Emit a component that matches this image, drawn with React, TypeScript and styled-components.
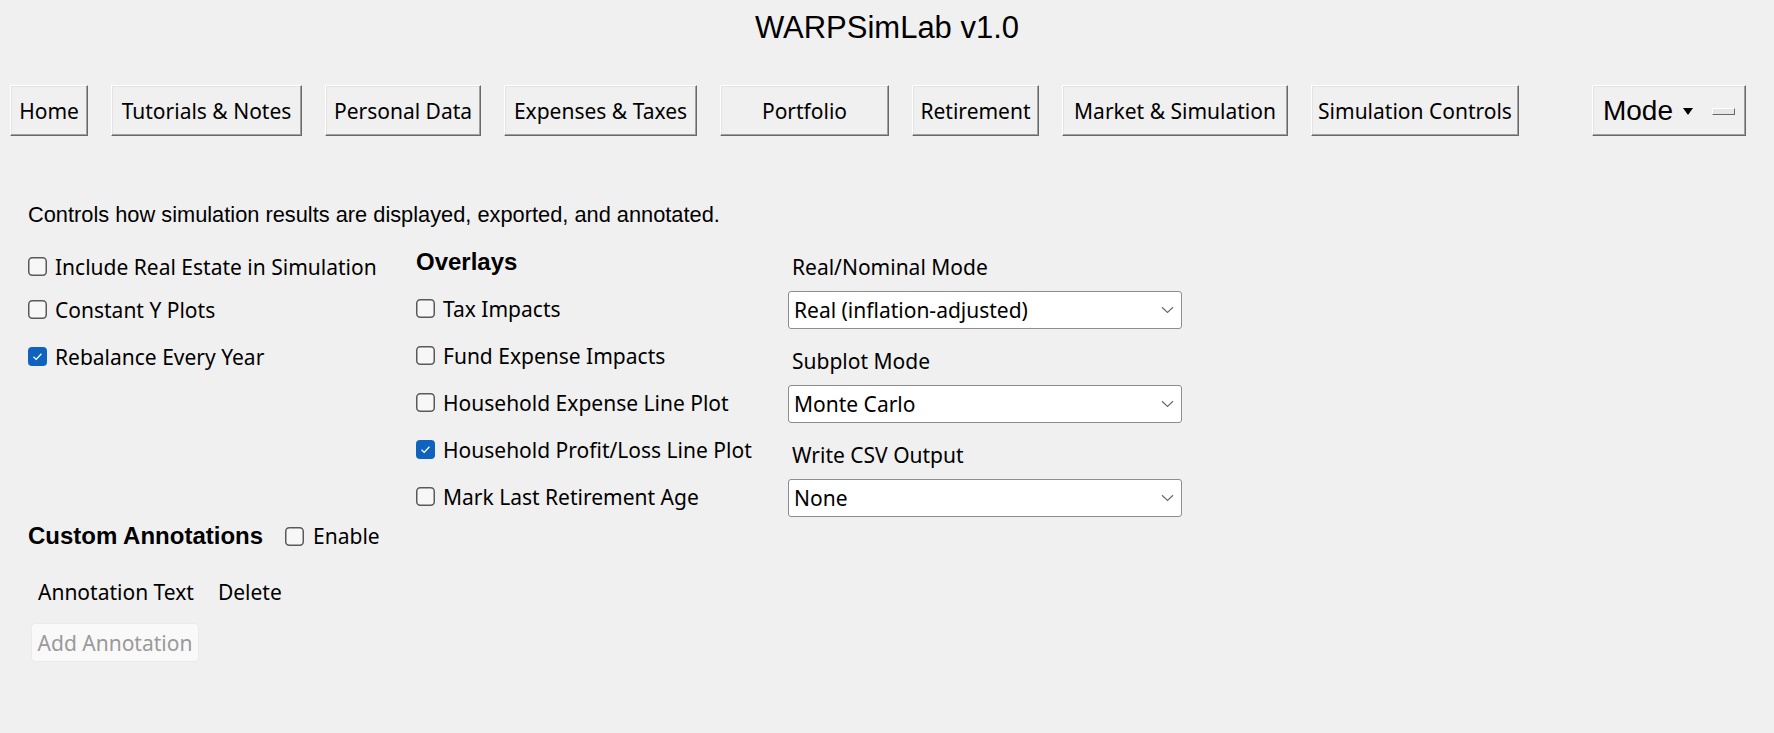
import styled, { createGlobalStyle } from 'styled-components';

/*
 *  globals
 */
const GlobalStyle = createGlobalStyle`
  html, body {
    margin: 0;
    padding: 0;
    background: #f0f0f0;
    overflow: hidden;
  }
`;

const ui = `'Noto Sans', 'Open Sans', sans-serif`;
const tk = `'Liberation Sans', Arial, sans-serif`;

const Window = styled.div`
  width: 1774px;
  height: 733px;
  background: #f0f0f0;
  display: flex;
  flex-direction: column;
  color: #000;
`;

const Title = styled.h1`
  margin: 0;
  padding-top: 10px;
  font-family: ${tk};
  font-size: 31px;
  font-weight: 400;
  line-height: 36px;
  text-align: center;
`;

/*
 *  nav bar
 */
const NavBar = styled.nav`
  display: flex;
  align-items: center;
  gap: 23px;
  margin-top: 39px;
  padding: 0 28px 0 10px;
`;

const raised = `
  box-sizing: border-box;
  background: #f0f0f0;
  border: 1px solid;
  border-color: #ffffff #696969 #696969 #ffffff;
  box-shadow: inset -1px -1px 0 #a0a0a0, inset 1px 1px 0 #e3e3e3;
`;

const NavButton = styled.button<{ $width: number }>`
  ${raised}
  width: ${(p) => p.$width}px;
  height: 51px;
  padding: 0;
  font-family: ${ui};
  font-size: 21px;
  color: #000;
`;

const ModeButton = styled.div`
  ${raised}
  margin-left: auto;
  height: 51px;
  display: flex;
  align-items: center;
  padding: 0 10px;
  font-family: ${tk};
  font-size: 28px;
`;

const Arrow = styled.span`
  width: 0;
  height: 0;
  margin: 2px 0 0 10px;
  border-left: 5px solid transparent;
  border-right: 5px solid transparent;
  border-top: 7px solid #000;
`;

const Indicator = styled.span`
  ${raised}
  width: 23px;
  height: 7px;
  margin: 2px 0 0 19px;
  box-shadow: none;
  background: #e6e6e6;
`;

/*
 *  content
 */
const Content = styled.main`
  padding-left: 28px;
`;

const Description = styled.p`
  margin: 66px 0 0;
  font-family: ${tk};
  font-size: 21.8px;
  line-height: 26px;
`;

const Columns = styled.div`
  display: flex;
  margin-top: 11px;
`;

const Column = styled.div<{ $width: number; $top?: number; $gap?: number }>`
  width: ${(p) => p.$width}px;
  padding-top: ${(p) => p.$top ?? 0}px;
  display: flex;
  flex-direction: column;
  gap: ${(p) => p.$gap ?? 0}px;
`;

const CheckRow = styled.label<{ $height: number }>`
  display: flex;
  align-items: center;
  gap: 8px;
  height: ${(p) => p.$height}px;
  font-family: ${ui};
  font-size: 21px;
`;

const SectionHead = styled.div`
  height: 46px;
  display: flex;
  align-items: center;
  font-family: ${tk};
  font-size: 24px;
  font-weight: 700;
`;

const Field = styled.div`
  display: flex;
  flex-direction: column;
  gap: 10px;
`;

const FieldLabel = styled.div`
  height: 28px;
  line-height: 28px;
  padding-left: 4px;
  font-family: ${ui};
  font-size: 21px;
`;

const Combo = styled.div`
  box-sizing: border-box;
  width: 394px;
  height: 38px;
  display: flex;
  align-items: center;
  justify-content: space-between;
  padding: 0 7px 0 5px;
  background: #fff;
  border: 1px solid #8d8d8d;
  border-radius: 3px;
  font-family: ${ui};
  font-size: 21px;
`;

const AnnotationBar = styled.div`
  height: 32px;
  display: flex;
  align-items: center;
  font-family: ${tk};
  font-size: 24px;
  font-weight: 700;
`;

const InlineCheck = styled(CheckRow)`
  margin-left: 22px;
  gap: 9px;
  font-weight: 400;
`;

const TableHead = styled.div`
  height: 32px;
  margin-top: 24px;
  padding-left: 10px;
  display: flex;
  align-items: center;
  gap: 24px;
  font-family: ${ui};
  font-size: 21px;
`;

const DisabledButton = styled.button`
  box-sizing: border-box;
  width: 168px;
  height: 39px;
  margin: 15px 0 0 3px;
  padding: 0;
  background: #f9f9f9;
  border: 1px solid #ebebeb;
  border-radius: 4px;
  color: #9a9a9a;
  font-family: ${ui};
  font-size: 21px;
`;

/*
 *  drawings
 */
const CheckBox = ({ checked }: { checked?: boolean }) => (
  <svg width="19" height="19" viewBox="0 0 19 19">
    {checked ? (
      <>
        <rect x="0" y="0" width="19" height="19" rx="4" fill="#0f62be" />
        <path d="M5.5 9.8 L8.2 12.4 L13.4 6.8" fill="none" stroke="#fff" strokeWidth="1.3" />
      </>
    ) : (
      <rect x="0.75" y="0.75" width="17.5" height="17.5" rx="3.5" fill="#f7f7f7" stroke="#5a5a5a" strokeWidth="1.5" />
    )}
  </svg>
);

const Chevron = () => (
  <svg width="13" height="8" viewBox="0 0 13 8">
    <path d="M1 1.2 L6.5 6.5 L12 1.2" fill="none" stroke="#6b6b6b" strokeWidth="1.2" />
  </svg>
);

/*
 *  data
 */
const tabs: [string, number][] = [
  ['Home', 78],
  ['Tutorials & Notes', 191],
  ['Personal Data', 156],
  ['Expenses & Taxes', 193],
  ['Portfolio', 169],
  ['Retirement', 127],
  ['Market & Simulation', 226],
  ['Simulation Controls', 208],
];

// label, checked, row height
const general: [string, boolean, number][] = [
  ['Include Real Estate in Simulation', false, 39],
  ['Constant Y Plots', false, 47],
  ['Rebalance Every Year', true, 47],
];

const overlays: [string, boolean][] = [
  ['Tax Impacts', false],
  ['Fund Expense Impacts', false],
  ['Household Expense Line Plot', false],
  ['Household Profit/Loss Line Plot', true],
  ['Mark Last Retirement Age', false],
];

const selects: [string, string][] = [
  ['Real/Nominal Mode', 'Real (inflation-adjusted)'],
  ['Subplot Mode', 'Monte Carlo'],
  ['Write CSV Output', 'None'],
];

export default function App() {
  return (
    <Window>
      <GlobalStyle />
      <Title>WARPSimLab v1.0</Title>

      <NavBar>
        {tabs.map(([label, width]) => (
          <NavButton key={label} $width={width}>
            {label}
          </NavButton>
        ))}
        <ModeButton>
          Mode
          <Arrow />
          <Indicator />
        </ModeButton>
      </NavBar>

      <Content>
        <Description>
          Controls how simulation results are displayed, exported, and annotated.
        </Description>

        <Columns>
          <Column $width={388} $top={8}>
            {general.map(([label, checked, height]) => (
              <CheckRow key={label} $height={height}>
                <CheckBox checked={checked} />
                {label}
              </CheckRow>
            ))}
          </Column>

          <Column $width={372}>
            <SectionHead>Overlays</SectionHead>
            {overlays.map(([label, checked]) => (
              <CheckRow key={label} $height={47}>
                <CheckBox checked={checked} />
                {label}
              </CheckRow>
            ))}
          </Column>

          <Column $width={394} $top={14} $gap={18}>
            {selects.map(([label, value]) => (
              <Field key={label}>
                <FieldLabel>{label}</FieldLabel>
                <Combo>
                  {value}
                  <Chevron />
                </Combo>
              </Field>
            ))}
          </Column>
        </Columns>

        <AnnotationBar>
          Custom Annotations
          <InlineCheck $height={32}>
            <CheckBox />
            Enable
          </InlineCheck>
        </AnnotationBar>

        <TableHead>
          <span>Annotation Text</span>
          <span>Delete</span>
        </TableHead>

        <DisabledButton disabled>Add Annotation</DisabledButton>
      </Content>
    </Window>
  );
}
